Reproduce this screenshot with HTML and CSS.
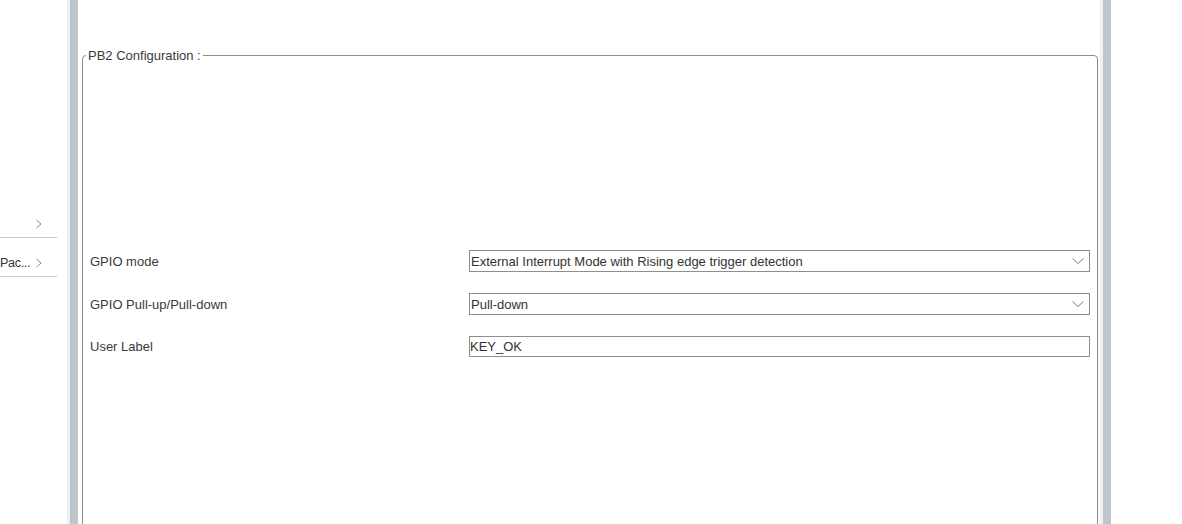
FILE: index.html
```html
<!DOCTYPE html>
<html>
<head>
<meta charset="utf-8">
<link rel="stylesheet" href="styles.css">
</head>
<body>
<div class="app">
  <aside class="nav">
    <div class="nav-item">
      <span class="nav-text"></span>
      <svg class="chev" width="8" height="10" viewBox="0 0 8 10"><polyline points="1.5,1 6,5 1.5,9" fill="none" stroke="#8a8a8a" stroke-width="1"/></svg>
    </div>
    <div class="nav-item">
      <span class="nav-text">Pac...</span>
      <svg class="chev" width="8" height="10" viewBox="0 0 8 10"><polyline points="1.5,1 6,5 1.5,9" fill="none" stroke="#8a8a8a" stroke-width="1"/></svg>
    </div>
  </aside>
  <div class="splitter"></div>
  <main class="content">
    <fieldset class="config">
      <legend class="config-title">PB2 Configuration :</legend>
      <div class="form">
        <div class="row">
          <span class="label">GPIO mode</span>
          <div class="select">
            <span>External Interrupt Mode with Rising edge trigger detection</span>
            <svg width="12" height="7" viewBox="0 0 12 7"><polyline points="0.5,0.5 6,5.5 11.5,0.5" fill="none" stroke="#7a7a7a" stroke-width="1"/></svg>
          </div>
        </div>
        <div class="row">
          <span class="label">GPIO Pull-up/Pull-down</span>
          <div class="select">
            <span>Pull-down</span>
            <svg width="12" height="7" viewBox="0 0 12 7"><polyline points="0.5,0.5 6,5.5 11.5,0.5" fill="none" stroke="#7a7a7a" stroke-width="1"/></svg>
          </div>
        </div>
        <div class="row row-short">
          <span class="label">User Label</span>
          <div class="input">KEY_OK</div>
        </div>
      </div>
    </fieldset>
  </main>
  <div class="splitter"></div>
  <div class="rest"></div>
</div>
</body>
</html>
```
FILE: styles.css
```css
html, body {
  margin: 0;
  padding: 0;
  background: #ffffff;
  height: 524px;
  overflow: hidden;
}
body {
  font-family: "Liberation Sans", Arial, sans-serif;
  font-size: 13px;
  color: #3a3a3a;
}
.app {
  display: flex;
  height: 524px;
  overflow: hidden;
}
.nav {
  width: 67px;
  flex: none;
  padding-top: 199px;
  box-sizing: border-box;
  overflow: hidden;
}
.nav-item {
  width: 57px;
  height: 39px;
  box-sizing: border-box;
  border-bottom: 1px solid #c9c9c9;
  display: flex;
  align-items: center;
  justify-content: space-between;
  padding-right: 14px;
  padding-top: 11px;
}
.nav-text {
  color: #333;
  white-space: nowrap;
  font-size: 12.5px;
  letter-spacing: -0.3px;
}
.chev { flex: none; }
.splitter {
  width: 11px;
  flex: none;
  background: #bcc6cc;
  border-left: 3px solid #eef1f3;
  box-sizing: border-box;
}
.content {
  width: 1022px;
  flex: none;
  box-sizing: border-box;
  padding: 0 2px 0 4px;
}
.config {
  margin: 48px 0 0 0;
  padding: 0 7px 0 7px;
  border: 1px solid #8c8c8c;
  border-radius: 4px;
  height: 520px;
  box-sizing: border-box;
  min-width: 0;
}
.config-title {
  margin-left: -4px;
  padding: 0 2px;
  color: #3a3a3a;
  font-size: 13px;
  line-height: 15px;
}
.form {
  padding-top: 187px;
  display: flex;
  flex-direction: column;
  gap: 21px;
}
.row {
  display: grid;
  grid-template-columns: 379px 621px;
  height: 22px;
  align-items: center;
}
.row-short {
  height: 21px;
}
.label {
  color: #3a3a3a;
}
.select, .input {
  height: 22px;
  box-sizing: border-box;
  border: 1px solid #8e8e8e;
  display: flex;
  align-items: center;
  justify-content: space-between;
  padding: 0 5px 0 1px;
  color: #333;
}
.input {
  height: 21px;
  padding-left: 0;
}
.rest { flex: 1; }
```
